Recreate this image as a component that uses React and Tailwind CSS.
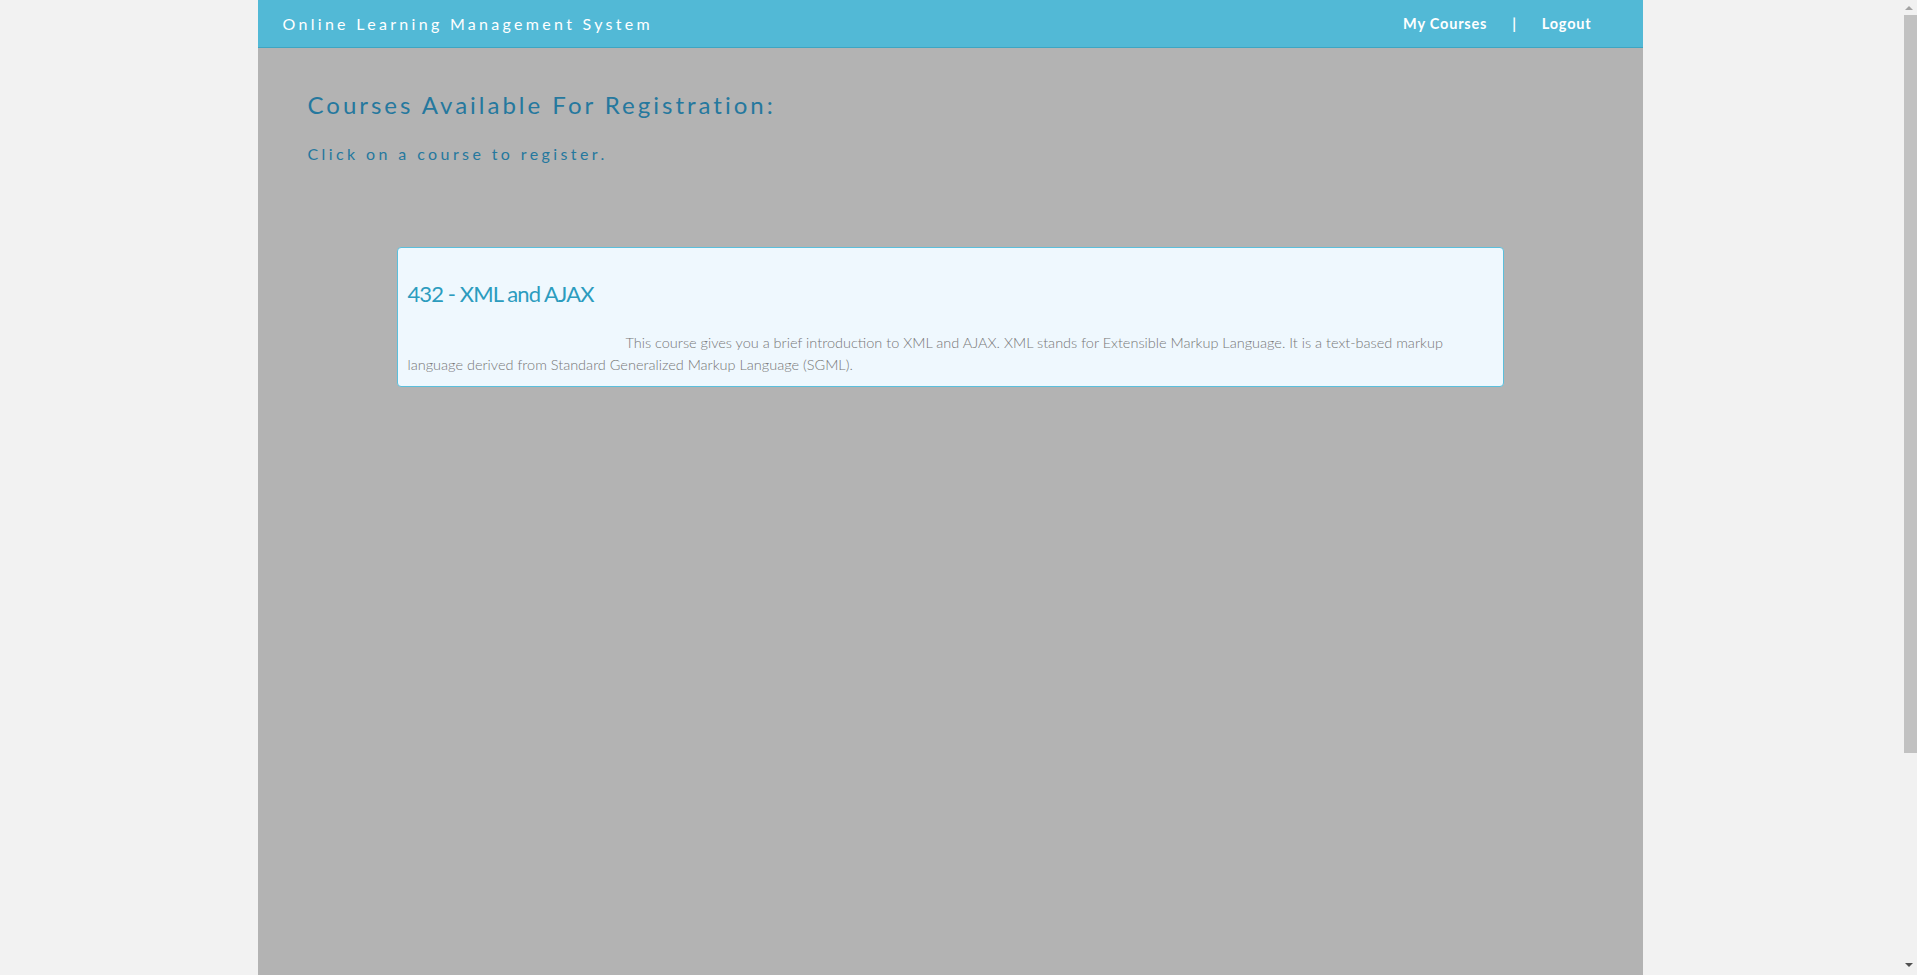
import React from 'react';

const courses = [
  {
    id: 432,
    name: 'XML and AJAX',
    lines: [
      'This course gives you a brief introduction to XML and AJAX. XML stands for Extensible Markup Language. It is a text-based markup',
      'language derived from Standard Generalized Markup Language (SGML).',
    ],
  },
];

const CourseCard = ({ course }) => (
  <div className="w-[1107px] mx-auto bg-[#eff8fe] border border-[#5bbfdc] rounded-[4px] px-[10px] pt-[32px] pb-[10px] cursor-pointer">
    <h3 className="text-[22px] leading-[28px] text-[#2c9cbe] font-normal tracking-[-0.9px]">
      {course.id} - {course.name}
    </h3>
    <p className="mt-[24px] text-[14.5px] leading-[22px] text-[#777777] font-light">
      <span className="inline-block w-[218px]" />
      {course.lines[0]}
      <br />
      {course.lines[1]}
    </p>
  </div>
);

// barra de desplazamiento dibujada (el navegador headless la oculta)
const FakeScrollbar = () => (
  <div className="w-[17px] h-full bg-[#f1f1f1] flex flex-col items-center">
    <div className="h-[15px] w-full flex items-center justify-center">
      <div className="w-0 h-0 border-l-[4px] border-r-[4px] border-b-[4px] border-l-transparent border-r-transparent border-b-[#a3a3a3]" />
    </div>
    <div className="w-full pl-[4px] h-[738px]">
      <div className="h-full bg-[#c1c1c1]" />
    </div>
    <div className="flex-1" />
    <div className="h-[17px] w-full flex items-center justify-center pb-[3px]">
      <div className="w-0 h-0 border-l-[4px] border-r-[4px] border-t-[4px] border-l-transparent border-r-transparent border-t-[#505050]" />
    </div>
  </div>
);

export default function App() {
  return (
    <div className="h-screen overflow-hidden flex bg-[#f2f2f2] font-['Lato',sans-serif]">
      <div className="flex-1 h-full">
        <div className="w-[1385px] mx-auto h-full bg-[#b3b3b3] flex flex-col">
          <header className="h-12 shrink-0 bg-[#52b9d6] border-b border-[#3ea5c2] flex items-center justify-between pl-[25px] pr-[51px]">
            <span className="text-white text-[16px] tracking-[3.3px]">Online Learning Management System</span>
            <nav className="flex items-center text-white text-[14.5px] font-bold tracking-[0.8px]">
              <a className="cursor-pointer">My Courses</a>
              <span className="mx-[25px]">|</span>
              <a className="cursor-pointer">Logout</a>
            </nav>
          </header>

          <main className="px-[50px] pt-[43px]">
            <h1 className="text-[24px] leading-[28px] text-[#25789e] tracking-[3px]">
              Courses Available For Registration:
            </h1>
            <p className="mt-[25px] text-[16px] leading-[20px] text-[#25789e] tracking-[3.4px]">
              Click on a course to register.
            </p>
          </main>

          <section className="mt-[83px]">
            {courses.map((c) => (
              <CourseCard key={c.id} course={c} />
            ))}
          </section>
        </div>
      </div>
      <FakeScrollbar />
    </div>
  );
}
